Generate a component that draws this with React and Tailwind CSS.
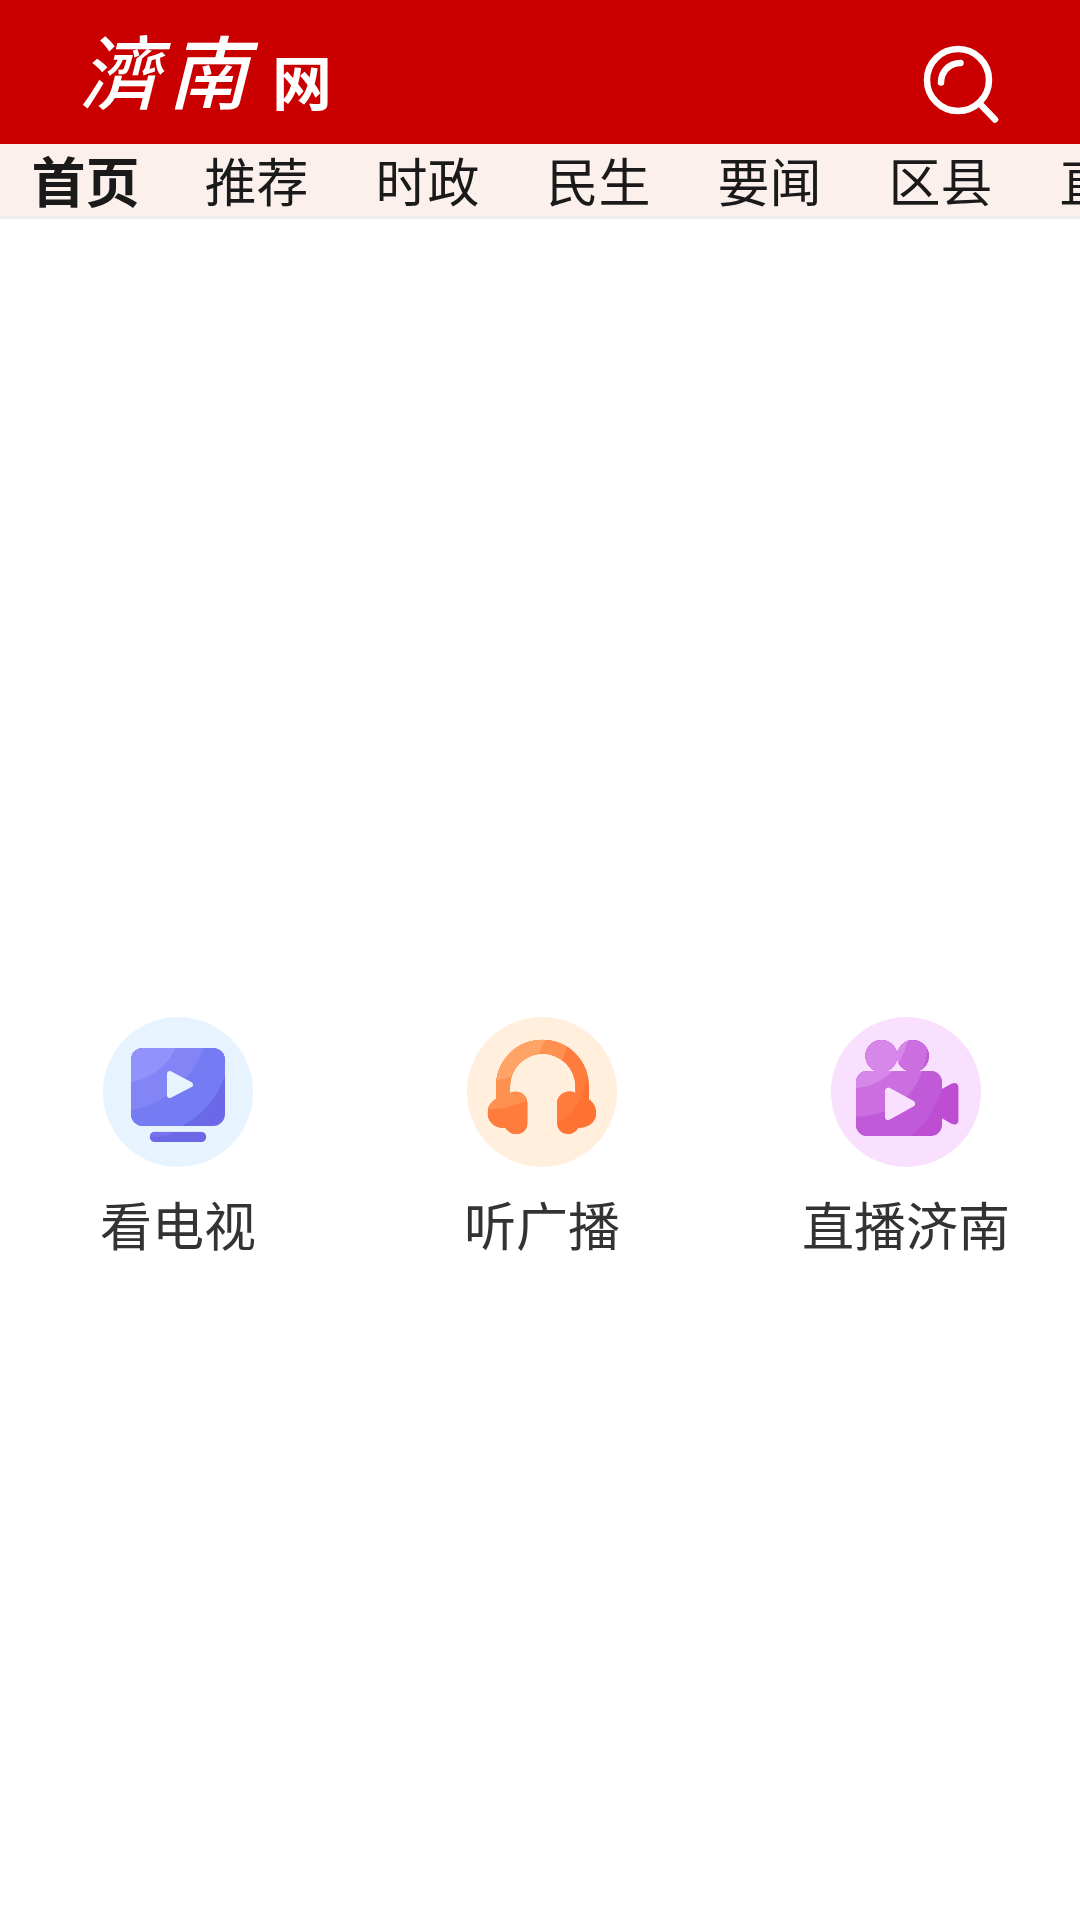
const tabs = ["首页", "推荐", "时政", "民生", "要闻", "区县", "直播"];

function SearchIcon() {
  return (
    <svg viewBox="0 0 80 80" className="size-20" fill="none" stroke="white" strokeWidth="6.5" strokeLinecap="round" aria-hidden="true">
      <circle cx="38" cy="36" r="31" />
      <path d="M61 61 75 75.5M21 38.5C21 28 29 19 40.5 19" />
    </svg>
  );
}

function TvIcon() {
  return (
    <svg viewBox="66 51 450 450" className="size-[150px]" aria-hidden="true">
      <defs>
        <clipPath id="tv-body">
          <rect x="150" y="144" width="282" height="234" rx="36" />
        </clipPath>
        <clipPath id="tv-stand">
          <rect x="206" y="395" width="170" height="31" rx="15.5" />
        </clipPath>
      </defs>
      <circle cx="291" cy="276" r="225" fill="#e7f3ff" />
      <g clipPath="url(#tv-body)">
        <path fill="#6b69e8" d="M150 144h282v234H150z" />
        <path fill="#757bf2" d="M150 144h282v84C410 292 365 345 303 378H150z" />
        <path fill="#8385f6" d="M150 144h218C334 240 250 313 150 332z" />
        <path fill="#9193fa" d="M150 144h134C258 199 210 236 150 246z" />
      </g>
      <g clipPath="url(#tv-stand)">
        <path fill="#6b69e8" d="M206 395h170v31H206z" />
        <path fill="#7673ee" d="M206 395h80Q250 413 206 411z" />
      </g>
      <path fill="#e7f3ff" stroke="#e7f3ff" strokeWidth="16" strokeLinejoin="round" d="M266 221v65l62-32z" />
    </svg>
  );
}

function HeadphonesIcon() {
  return (
    <svg viewBox="75 51 450 450" className="size-[150px]" aria-hidden="true">
      <defs>
        <clipPath id="headphones">
          <path d="M162 297V259a139.500 139.500 0 0 1 279 0v39c14 9 22 25 22 41 0 26-22 45-54 45-9 13-18 18-30 18-21 0-34-15-34-34v-58c0-25 29-44 55-31v-20a98 98 0 0 0-196 0v20c26-11 52 5 52 31v58c0 21-14 34-34 34-13 0-22-6-32-18-34 1-53-20-53-45 0-17 9-33 25-42z" />
        </clipPath>
      </defs>
      <circle cx="300" cy="276" r="225" fill="#ffefdc" />
      <g clipPath="url(#headphones)">
        <path fill="#ff7232" d="M130 110h340v300H130z" />
        <path fill="#ff7c3c" d="M130 110h311C445 235 425 325 345 371V410H130z" />
        <path fill="#ff9150" d="M130 110h256C350 220 310 322 130 329z" />
        <path fill="#ffa366" d="M130 110h182C285 190 240 235 130 246z" />
      </g>
    </svg>
  );
}

function CameraIcon() {
  return (
    <svg viewBox="123 51 450 450" className="size-[150px]" aria-hidden="true">
      <defs>
        <clipPath id="camera">
          <circle cx="274" cy="168" r="48" />
          <circle cx="369" cy="168" r="48" />
          <rect x="198" y="213" width="258" height="195" rx="34" />
          <path d="M452 269 484 251Q505 244 506 264V359Q505 379 484 371L452 352z" />
        </clipPath>
      </defs>
      <circle cx="348" cy="276" r="225" fill="#f9e0ff" />
      <g clipPath="url(#camera)">
        <path fill="#bd4ed4" d="M190 110h320v300H190z" />
        <path fill="#c15ad9" d="M190 110h292C475 255 430 360 360 408H190z" />
        <path fill="#ca6ee0" d="M190 110h225C410 265 330 350 190 350z" />
        <path fill="#d787ea" d="M190 110h165C340 203 275 261 190 265z" />
      </g>
      <path fill="#f9e0ff" stroke="#f9e0ff" strokeWidth="20" strokeLinejoin="round" d="M295 273v77l70-39z" />
    </svg>
  );
}

const services = [
  { label: "看电视", Icon: TvIcon },
  { label: "听广播", Icon: HeadphonesIcon },
  { label: "直播济南", Icon: CameraIcon },
];

export default function App() {
  return (
    <div className="min-h-screen overflow-x-hidden bg-white font-['Noto_Sans_CJK_SC',sans-serif] text-[#1a1a1a]">
      <header className="flex h-36 items-center justify-between bg-[#ca0000] px-20 text-white">
        <a href="#" className="flex items-center gap-6">
          <span className="flex gap-2 pb-2 font-['Noto_Sans_CJK_TC',sans-serif] text-[80px] leading-[96px] font-medium italic">
            <span>濟</span>
            <span>南</span>
          </span>
          <span className="pt-4 text-[60px] leading-[72px] font-bold">网</span>
        </a>
        <button type="button" aria-label="搜索" className="pt-6">
          <SearchIcon />
        </button>
      </header>

      <nav className="flex border-b-3 border-[#ececec] bg-[#fcf0ec]">
        {tabs.map((tab, i) => (
          <a
            key={tab}
            href="#"
            aria-current={i === 0 ? "page" : undefined}
            className={
              i === 0
                ? "w-[171px] shrink-0 text-center text-[54px] leading-[72px] font-bold"
                : "w-[171px] shrink-0 text-center text-[52px] leading-[72px]"
            }
          >
            {tab}
          </a>
        ))}
      </nav>

      <main className="pt-[798px]">
        <div className="-mr-2 -ml-1 grid grid-cols-3">
          {services.map(({ label, Icon }) => (
            <a key={label} href="#" className="flex flex-col items-center gap-5 text-[52px] leading-[74px] text-[#333]">
              <Icon />
              <span>{label}</span>
            </a>
          ))}
        </div>
      </main>
    </div>
  );
}
